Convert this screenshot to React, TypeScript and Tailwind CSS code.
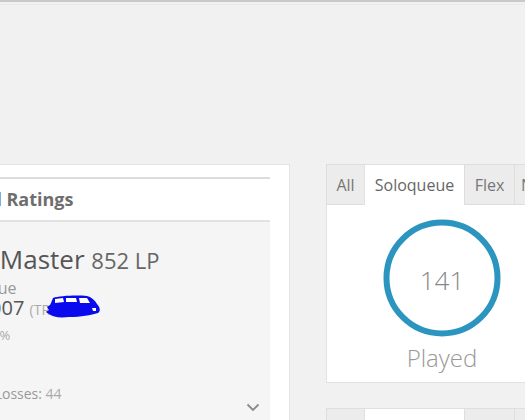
import type { ReactNode } from "react";

/**
 * Profile stats: ranked ratings card and games-played tabs.
 * The page is scrolled horizontally, so the left card is cut by the window edge.
 */

const QUEUES = [
  { name: "All", width: "w-[39px]" },
  { name: "Soloqueue", width: "w-[101px]" },
  { name: "Flex", width: "w-[51px]" },
  { name: "Normal", width: "w-[70px]" },
];

function Tabs({ active }: { active: string }) {
  return (
    <div className="flex h-[41px]">
      {QUEUES.map((q) => (
        <div
          key={q.name}
          className={
            q.name === active
              ? `${q.width} -ml-px flex shrink-0 items-center justify-center border border-b-0 border-[#e0e0e0] bg-white text-[16px] text-[#666]`
              : `${q.width} -ml-px flex shrink-0 items-center justify-center border border-[#dedede] bg-[#ececec] text-[16px] text-[#777] first:ml-0`
          }
        >
          {q.name}
        </div>
      ))}
    </div>
  );
}

function Scribble() {
  return (
    <svg
      className="absolute left-[15px] top-[-5px]"
      width="56"
      height="24"
      viewBox="0 0 56 24"
      fill="none"
    >
      <path
        d="M6 8 L8 3 C14 1 30 0 42 1 C46 2 50 5 52 9 C55 12 56 16 53 18 C46 20 36 22 24 22 C14 23 8 22 4 19 L1 17 L4 15 L2 12 L5 10 Z"
        fill="#0a0aee"
      />
      <path d="M10 4 L18 3 L19 7 L10 8 Z M21 3 L31 3 L32 7 L21 7 Z M34 3 L42 3 L45 8 L35 8 Z" fill="#ffffff" />
      <path d="M47 13 L51 13 L51 16 L48 16 Z" fill="#ffffff" />
    </svg>
  );
}

function Line({ className, children }: { className: string; children: ReactNode }) {
  return <div className={`whitespace-nowrap ${className}`}>{children}</div>;
}

function RatingsCard() {
  return (
    <div className="w-[400px] shrink-0 border border-[#e4e4e4] bg-white pl-[10px] pr-[19px] pt-[12px]">
      <div className="border-t-2 border-[#dcdcdc]">
        <div className="flex h-[43px] items-center border-b-2 border-[#e2e2e2] pl-[33px] text-[18px] font-bold text-[#6e6e6e]">
          Ranked Ratings
        </div>
        <div className="h-[300px] bg-[#f5f5f5] pl-[33px] pt-[22px]">
          <Line className="-ml-[10px] text-[26px] leading-[30px] text-[#555]">
            GrandMaster <span className="text-[22px] text-[#666]">852 LP</span>
          </Line>
          <Line className="mt-[3px] ml-[3px] text-[16px] leading-[20px] text-[#999]">Soloqueue</Line>
          <Line className="-mt-[2px] ml-[6px] text-[20px] leading-[24px] text-[#555]">
            Elo: 2007{" "}
            <span className="relative text-[14px] text-[#aaa]">
              (TR
              <Scribble />
            </span>
          </Line>
          <Line className="mt-[4px] -ml-[4px] text-[13px] leading-[18px] text-[#aaa]">Winrate: 69%</Line>
          <Line className="mt-[41px] ml-[2px] text-[14px] leading-[18px] text-[#999]">
            Wins: 97 Losses: <span className="text-[#aaa]">44</span>
          </Line>
          <div className="flex justify-end pr-[10px]">
            <svg width="14" height="9" viewBox="0 0 14 9" fill="none">
              <path d="M1.5 1.5 L7 7 L12.5 1.5" stroke="#8a8a8a" strokeWidth="1.8" />
            </svg>
          </div>
        </div>
      </div>
    </div>
  );
}

function PlayedCard() {
  return (
    <div className="w-[232px] shrink-0">
      <Tabs active="Soloqueue" />
      <div className="-mt-px flex h-[179px] flex-col items-center border border-[#e2e2e2] bg-white pt-[14px]">
        <svg width="118" height="118" viewBox="0 0 118 118">
          <circle cx="59" cy="59" r="55.5" fill="none" stroke="#2b95bf" strokeWidth="6" />
          <text x="59" y="71" textAnchor="middle" fontSize="26" fontWeight="300" fill="#888">
            141
          </text>
        </svg>
        <div className="mt-[8px] text-[24px] font-light leading-[26px] text-[#999]">Played</div>
      </div>
      <div className="mt-[25px]">
        <Tabs active="Soloqueue" />
      </div>
    </div>
  );
}

export default function App() {
  return (
    <div className="h-[420px] w-[525px] overflow-hidden border-t-2 border-[#c9c9c9] bg-[#f1f1f1] font-['Open_Sans',sans-serif]">
      <div className="mt-[2px] h-px bg-[#e9e9e9]" />
      <div className="-ml-[110px] flex gap-[36px] pt-[159px]">
        <RatingsCard />
        <PlayedCard />
      </div>
    </div>
  );
}
